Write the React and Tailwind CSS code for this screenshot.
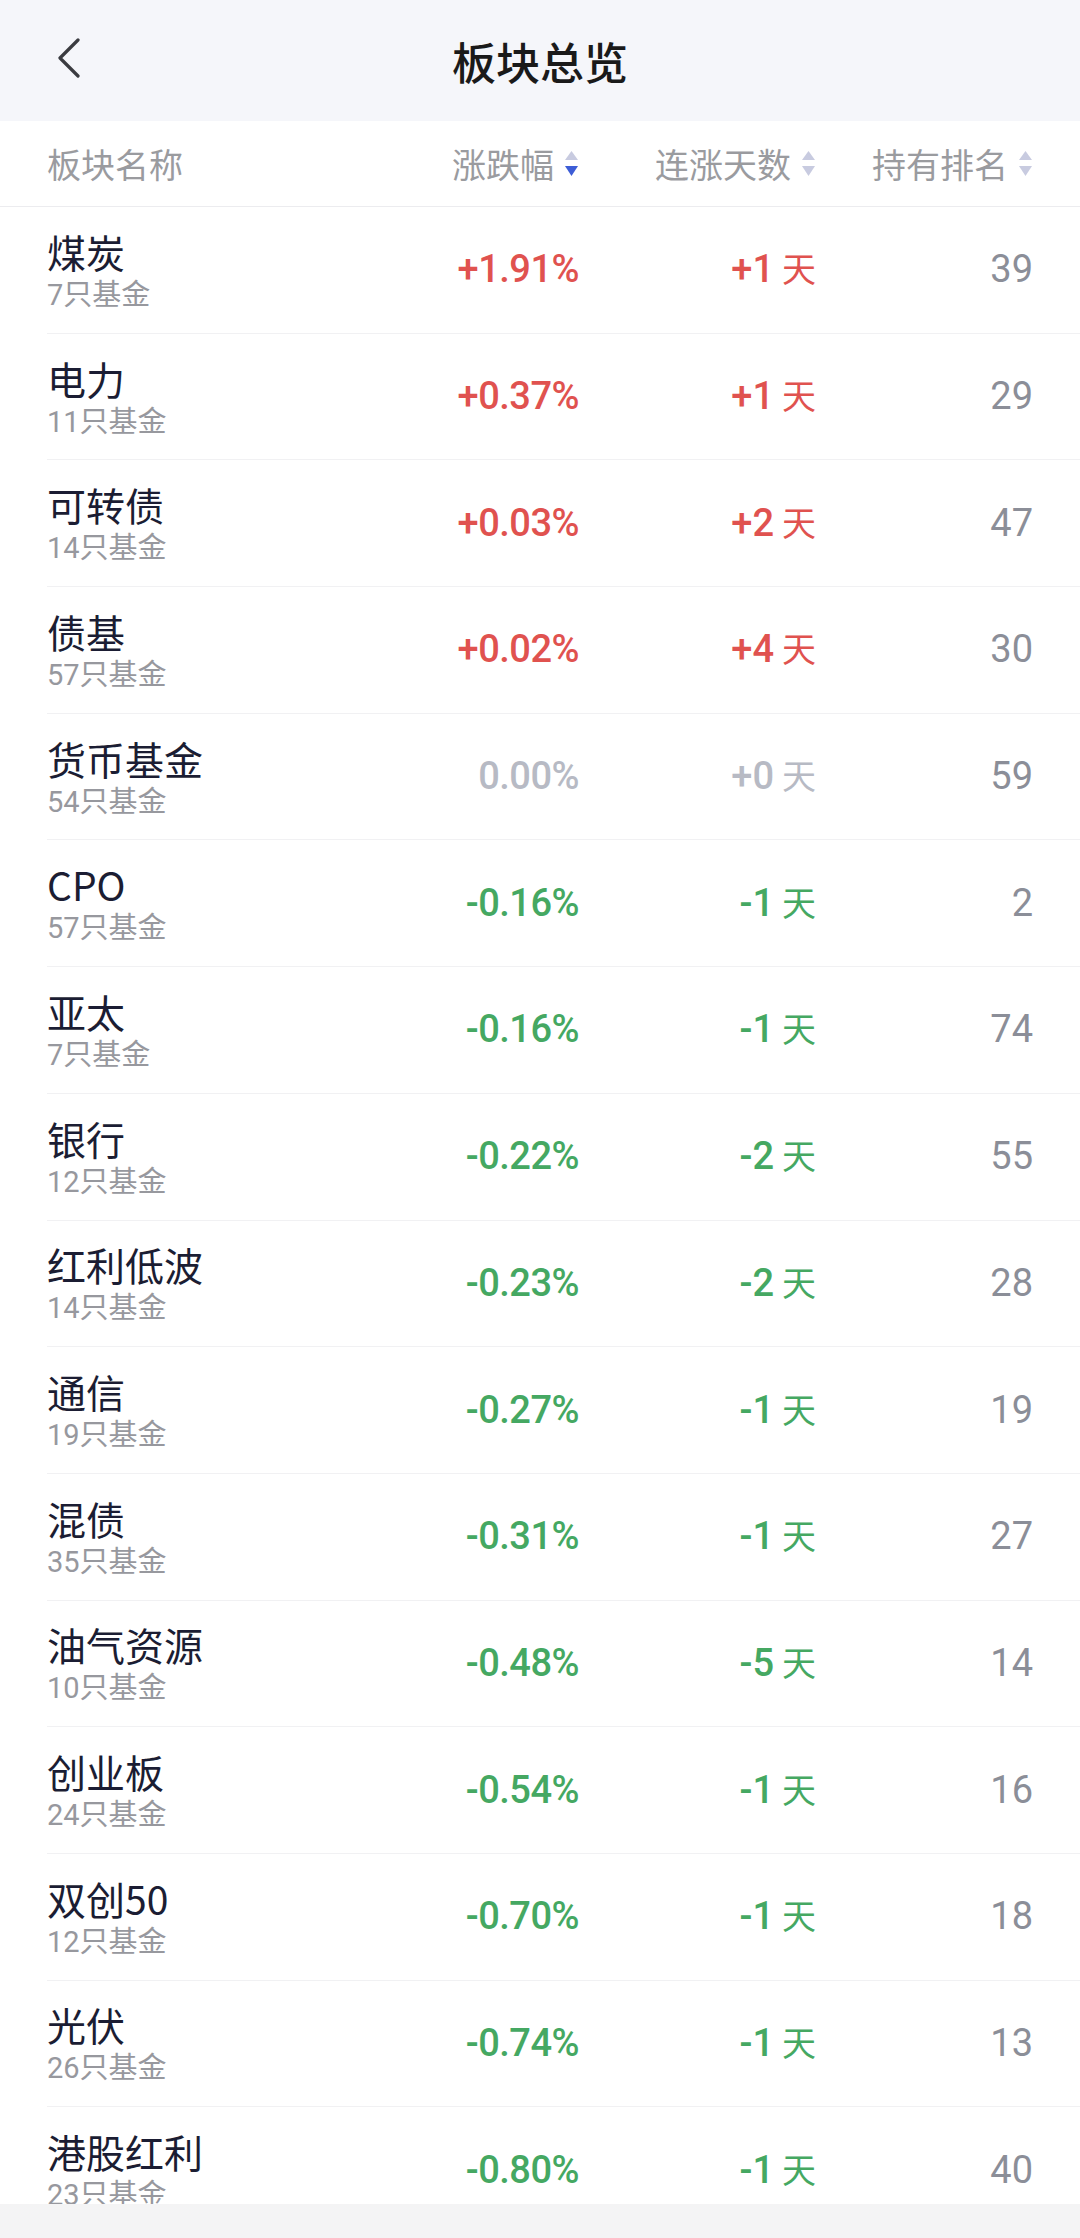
import React from 'react';

const rows = [
    { name: '煤炭', count: 7, pct: '+1.91%', days: '+1', rank: 39, tone: 'up' },
    { name: '电力', count: 11, pct: '+0.37%', days: '+1', rank: 29, tone: 'up' },
    { name: '可转债', count: 14, pct: '+0.03%', days: '+2', rank: 47, tone: 'up' },
    { name: '债基', count: 57, pct: '+0.02%', days: '+4', rank: 30, tone: 'up' },
    { name: '货币基金', count: 54, pct: '0.00%', days: '+0', rank: 59, tone: 'flat' },
    { name: 'CPO', count: 57, pct: '-0.16%', days: '-1', rank: 2, tone: 'down' },
    { name: '亚太', count: 7, pct: '-0.16%', days: '-1', rank: 74, tone: 'down' },
    { name: '银行', count: 12, pct: '-0.22%', days: '-2', rank: 55, tone: 'down' },
    { name: '红利低波', count: 14, pct: '-0.23%', days: '-2', rank: 28, tone: 'down' },
    { name: '通信', count: 19, pct: '-0.27%', days: '-1', rank: 19, tone: 'down' },
    { name: '混债', count: 35, pct: '-0.31%', days: '-1', rank: 27, tone: 'down' },
    { name: '油气资源', count: 10, pct: '-0.48%', days: '-5', rank: 14, tone: 'down' },
    { name: '创业板', count: 24, pct: '-0.54%', days: '-1', rank: 16, tone: 'down' },
    { name: '双创50', count: 12, pct: '-0.70%', days: '-1', rank: 18, tone: 'down' },
    { name: '光伏', count: 26, pct: '-0.74%', days: '-1', rank: 13, tone: 'down' },
    { name: '港股红利', count: 23, pct: '-0.80%', days: '-1', rank: 40, tone: 'down' },
];

const toneClass = {
    up: 'text-[#e0524f]',
    down: 'text-[#45a862]',
    flat: 'text-[#b7bac4]',
};

const cjk = "font-['Noto_Sans_CJK_SC',sans-serif]";
const num = "font-['Roboto','Noto_Sans_CJK_SC',sans-serif]";

const SortIcon = ({ active }) => (
    <svg width="15" height="30" viewBox="0 0 15 30" className="ml-[10px] shrink-0">
        <path d="M7.5 2 L14 11 L1 11 Z" fill="#c8cbe0" />
        <path d="M1 17 L14 17 L7.5 27 Z" fill={active ? '#3d5dd6' : '#c8cbe0'} />
    </svg>
);

const Row = ({ r }) => (
    <div className="h-[126.7px] shrink-0 flex items-center pr-[47px] ml-[47px] border-b border-[#f1f1f3]">
        <div className="flex-1 flex flex-col pt-[2px]">
            <span className={`${cjk} text-[39px] leading-[48px] text-[#1b1d33]`}>{r.name}</span>
            <span className={`${num} text-[29px] leading-[40px] text-[#97989e]`}>{r.count}只基金</span>
        </div>
        <div className={`w-[200px] text-right ${num} text-[38px] font-medium tracking-[-0.5px] ${toneClass[r.tone]}`}>{r.pct}</div>
        <div className={`w-[237px] text-right ${num} text-[38px] font-medium ${toneClass[r.tone]}`}>
            {r.days}
            <span className={`${cjk} ml-[8px] text-[34px] font-normal`}>天</span>
        </div>
        <div className={`w-[217px] text-right ${num} text-[38px] text-[#8b8e98]`}>{r.rank}</div>
    </div>
);

export default function App() {
    return (
        <div className="w-[1080px] h-[2238px] flex flex-col bg-white overflow-hidden">
            <div className="h-[121px] shrink-0 bg-[#f5f6fa] relative flex items-center justify-center">
                <svg width="24" height="42" viewBox="0 0 24 42" className="absolute left-[57px] top-[38px]">
                    <polyline points="21,2 3,20 21,38" fill="none" stroke="#3a3b40" strokeWidth="3.2" strokeLinecap="round" strokeLinejoin="round" />
                </svg>
                <span className={`${cjk} text-[44px] font-medium text-[#1a1a1a]`}>板块总览</span>
            </div>
            <div className="h-[86px] shrink-0 flex items-center px-[47px] border-b border-[#ececef]">
                <div className={`flex-1 ${cjk} text-[34px] text-[#9a9b9f]`}>板块名称</div>
                <div className={`w-[200px] flex items-center justify-end ${cjk} text-[34px] text-[#9a9b9f]`}>
                    涨跌幅<SortIcon active />
                </div>
                <div className={`w-[237px] flex items-center justify-end ${cjk} text-[34px] text-[#9a9b9f]`}>
                    连涨天数<SortIcon />
                </div>
                <div className={`w-[217px] flex items-center justify-end ${cjk} text-[34px] text-[#9a9b9f]`}>
                    持有排名<SortIcon />
                </div>
            </div>
            <div className="flex-1 flex flex-col overflow-hidden">
                {rows.map((r) => (
                    <Row key={r.name} r={r} />
                ))}
            </div>
            <div className="h-[34px] shrink-0 bg-[#f4f4f5]" />
        </div>
    );
}
